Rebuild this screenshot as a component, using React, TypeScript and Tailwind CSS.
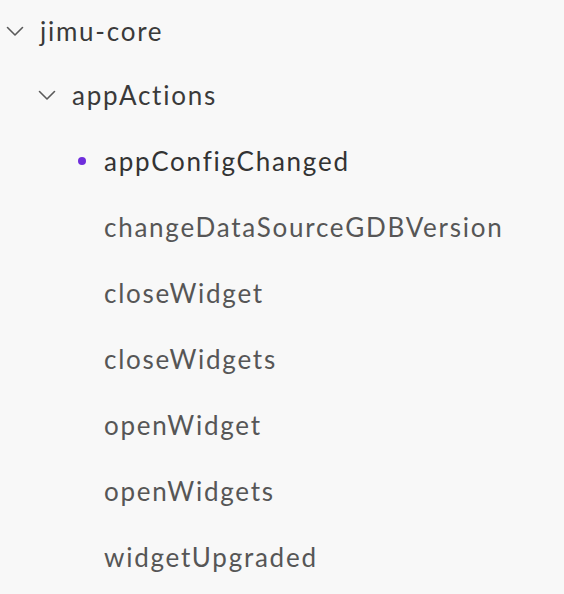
import React from "react";

const Chevron = () => (
  <svg width="18" height="11" viewBox="0 0 18 11" fill="none" className="shrink-0">
    <path d="M1.5 1.5 L9 9 L16.5 1.5" stroke="#5a5a5a" strokeWidth="1.6" strokeLinecap="round" strokeLinejoin="round" />
  </svg>
);

const leaves = [
  "changeDataSourceGDBVersion",
  "closeWidget",
  "closeWidgets",
  "openWidget",
  "openWidgets",
  "widgetUpgraded",
];

export default function App() {
  return (
    <div
      className="w-[564px] h-[594px] bg-[#f8f8f8] overflow-hidden"
      style={{ fontFamily: "Lato, 'Noto Sans', sans-serif" }}
    >
      <div className="flex items-center h-[62px] pl-[6px] gap-[16px]">
        <Chevron />
        <span className="text-[26px] tracking-[1.75px] text-[#3a3a3a]">jimu-core</span>
      </div>
      <div className="flex items-center h-[66px] pl-[38px] gap-[16px]">
        <Chevron />
        <span className="text-[26px] tracking-[1.75px] text-[#3a3a3a]">appActions</span>
      </div>
      <div className="flex items-center h-[66px] pl-[78px]">
        <span className="w-[8px] h-[8px] rounded-full bg-[#6f2edc] shrink-0" />
        <span className="ml-[18px] text-[26px] tracking-[1.75px] text-[#333333]">appConfigChanged</span>
      </div>
      {leaves.map((l) => (
        <div key={l} className="flex items-center h-[66px] pl-[104px]">
          <span className="text-[26px] tracking-[1.75px] text-[#565656]">{l}</span>
        </div>
      ))}
    </div>
  );
}
